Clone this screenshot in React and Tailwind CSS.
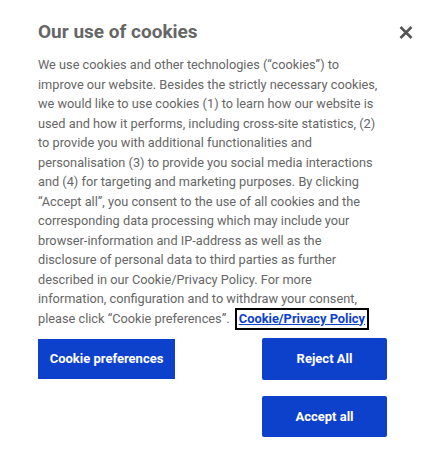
export default function App() {
  const lines = [
    "We use cookies and other technologies (“cookies”) to",
    "improve our website. Besides the strictly necessary cookies,",
    "we would like to use cookies (1) to learn how our website is",
    "used and how it performs, including cross-site statistics, (2)",
    "to provide you with additional functionalities and",
    "personalisation (3) to provide you social media interactions",
    "and (4) for targeting and marketing purposes. By clicking",
    "“Accept all”, you consent to the use of all cookies and the",
    "corresponding data processing which may include your",
    "browser-information and IP-address as well as the",
    "disclosure of personal data to third parties as further",
    "described in our Cookie/Privacy Policy. For more",
    "information, configuration and to withdraw your consent,",
  ];
  return (
    <div className="w-[438px] h-[459px] bg-white font-['Roboto',sans-serif] text-[#666666]">
      <div className="pl-[38px] pr-[25px] pt-[18px]">
        <div className="flex items-center justify-between h-[28px]">
          <h2 className="text-[19px] leading-[28px] font-bold text-[#666666]">Our use of cookies</h2>
          <button className="w-[14px] h-[14px] flex items-center justify-center" aria-label="Close">
            <svg width="14" height="13" viewBox="0 0 14 13">
              <path d="M1.5 1 L12.5 12 M12.5 1 L1.5 12" stroke="#555555" strokeWidth="2.6" strokeLinecap="butt" />
            </svg>
          </button>
        </div>
        <p className="mt-[9px] text-[12.75px] leading-[19.5px] whitespace-nowrap">
          {lines.map((l, i) => (
            <span key={i} className="block">{l}</span>
          ))}
          <span className="block">
            please click “Cookie preferences”.{" "}
            <a href="#" className="ml-[4px] inline-block outline outline-[2px] outline-black px-[2px] leading-[18px] text-[12.85px] font-bold text-[#0d41cc] underline">Cookie/Privacy Policy</a>
          </span>
        </p>
        <div className="mt-[10px] flex justify-between w-[349px]">
          <button className="w-[137px] h-[40px] mt-[1px] bg-[#0d41cc] text-white text-[13px] font-bold">Cookie preferences</button>
          <div className="flex flex-col gap-[16px]">
            <button className="w-[125px] h-[42px] rounded-[2px] bg-[#0d41cc] text-white text-[13px] font-bold">Reject All</button>
            <button className="w-[125px] h-[41px] rounded-[2px] bg-[#0d41cc] text-white text-[13px] font-bold">Accept all</button>
          </div>
        </div>
      </div>
    </div>
  );
}
